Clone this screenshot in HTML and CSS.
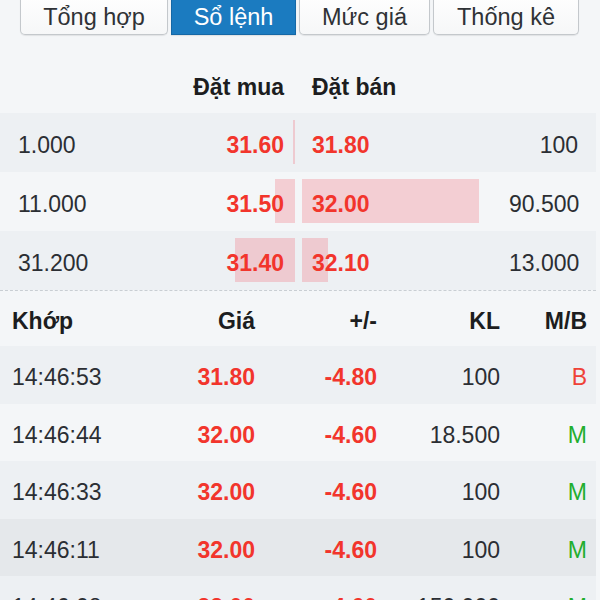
FILE: index.html
```html
<!DOCTYPE html>
<html lang="vi">
<head>
<meta charset="utf-8">
<title>Sổ lệnh</title>
<link rel="stylesheet" href="styles.css">
</head>
<body>
<div class="page">
  <nav class="tabs">
    <div class="tab">Tổng hợp</div>
    <div class="tab active">Sổ lệnh</div>
    <div class="tab">Mức giá</div>
    <div class="tab">Thống kê</div>
  </nav>

  <section class="book">
    <div class="book-head">
      <div></div>
      <div class="bid-h">Đặt mua</div>
      <div class="ask-h">Đặt bán</div>
      <div></div>
    </div>
    <div class="book-row dark">
      <div class="qty-l">1.000</div>
      <div class="bid"><span class="bar" style="width:2px"></span><span class="price">31.60</span></div>
      <div class="ask"><span class="bar" style="width:0px"></span><span class="price">31.80</span></div>
      <div class="qty-r">100</div>
    </div>
    <div class="book-row light">
      <div class="qty-l">11.000</div>
      <div class="bid"><span class="bar" style="width:20px"></span><span class="price">31.50</span></div>
      <div class="ask"><span class="bar" style="width:177px"></span><span class="price">32.00</span></div>
      <div class="qty-r">90.500</div>
    </div>
    <div class="book-row dark">
      <div class="qty-l">31.200</div>
      <div class="bid"><span class="bar" style="width:60px"></span><span class="price">31.40</span></div>
      <div class="ask"><span class="bar" style="width:26px"></span><span class="price">32.10</span></div>
      <div class="qty-r">13.000</div>
    </div>
  </section>

  <section class="trades">
    <div class="tr head">
      <div class="c-time">Khớp</div>
      <div class="c-num">Giá</div>
      <div class="c-num">+/-</div>
      <div class="c-num">KL</div>
      <div class="c-num">M/B</div>
    </div>
    <div class="tr dark">
      <div class="c-time">14:46:53</div>
      <div class="c-num red b">31.80</div>
      <div class="c-num red b">-4.80</div>
      <div class="c-num">100</div>
      <div class="c-num side-b">B</div>
    </div>
    <div class="tr light">
      <div class="c-time">14:46:44</div>
      <div class="c-num red b">32.00</div>
      <div class="c-num red b">-4.60</div>
      <div class="c-num">18.500</div>
      <div class="c-num side-m">M</div>
    </div>
    <div class="tr dark">
      <div class="c-time">14:46:33</div>
      <div class="c-num red b">32.00</div>
      <div class="c-num red b">-4.60</div>
      <div class="c-num">100</div>
      <div class="c-num side-m">M</div>
    </div>
    <div class="tr darker">
      <div class="c-time">14:46:11</div>
      <div class="c-num red b">32.00</div>
      <div class="c-num red b">-4.60</div>
      <div class="c-num">100</div>
      <div class="c-num side-m">M</div>
    </div>
    <div class="tr dark">
      <div class="c-time">14:46:08</div>
      <div class="c-num red b">32.00</div>
      <div class="c-num red b">-4.60</div>
      <div class="c-num">150.000</div>
      <div class="c-num side-m">M</div>
    </div>
  </section>
</div>
</body>
</html>
```

FILE: styles.css
```css
* { box-sizing: border-box; }

html, body {
  margin: 0;
  padding: 0;
  background: #f4f6f8;
  overflow: hidden;
}

body {
  font-family: "Liberation Sans", Arial, Helvetica, sans-serif;
  font-size: 23px;
  color: #2b2e33;
}

.page {
  width: 596px;
  height: 600px;
  overflow: hidden;
  background: #f4f6f8;
}

/* Tabs */
.tabs {
  display: grid;
  grid-template-columns: 148px 125px 131px 146px;
  column-gap: 3px;
  margin: -8px 0 0 20px;
  height: 43px;
}

.tab {
  display: flex;
  align-items: center;
  justify-content: center;
  padding-top: 8px;
  background: linear-gradient(#ffffff, #f6f7f8);
  border: 1px solid #c4c8cc;
  border-top: none;
  border-radius: 0 0 5px 5px;
  color: #2f3236;
  font-size: 23.5px;
  box-shadow: 0 1px 1px rgba(0,0,0,0.08);
}

.tab.active {
  background: #1b7bc0;
  border-color: #1568a6;
  color: #ffffff;
  border-radius: 0;
}

/* Order book */
.book {
  border-bottom: 1px dashed #c9ced3;
}

.book-head,
.book-row {
  display: grid;
  grid-template-columns: 150px 120px 200px 1fr;
  column-gap: 7px;
  padding: 0 18px 0 18px;
}

.book-head {
  height: 78px;
  align-items: end;
  padding-bottom: 12px;
  font-weight: bold;
  color: #1c1d20;
}

.bid-h { text-align: right; padding-right: 11px; }
.ask-h { padding-left: 10px; }

.book-row {
  height: 59px;
  align-items: stretch;
}

.book-row.dark { background: #edf0f3; }
.book-row.light { background: #f4f6f8; }

.qty-l,
.qty-r,
.bid,
.ask {
  display: flex;
  align-items: center;
  padding-top: 6px;
}

.qty-l { justify-content: flex-start; }
.qty-r { justify-content: flex-end; }

.bid,
.ask {
  position: relative;
}

.bid { justify-content: flex-end; padding-right: 11px; }
.ask { justify-content: flex-start; padding-left: 10px; }

.bar {
  position: absolute;
  top: 7px;
  height: 44px;
  background: rgba(240, 150, 160, 0.42);
}

.bid .bar { right: 0; }
.ask .bar { left: 0; }

.price {
  position: relative;
  color: #f2352c;
  font-weight: bold;
}

/* Trades */
.tr {
  display: grid;
  grid-template-columns: 143px 100px 122px 123px 1fr;
  padding: 6px 9px 0 12px;
  height: 57.5px;
  align-items: center;
}

.tr.head {
  height: 55px;
  font-weight: bold;
  color: #1c1d20;
  background: #f4f6f8;
}

.tr.dark { background: #edf0f3; }
.tr.light { background: #f4f6f8; }
.tr.darker { background: #e5e8eb; }

.c-time { text-align: left; }
.c-num { text-align: right; }

.red { color: #f2352c; }
.b { font-weight: bold; }
.side-b { color: #ef4237; }
.side-m { color: #1fae2e; }
```
